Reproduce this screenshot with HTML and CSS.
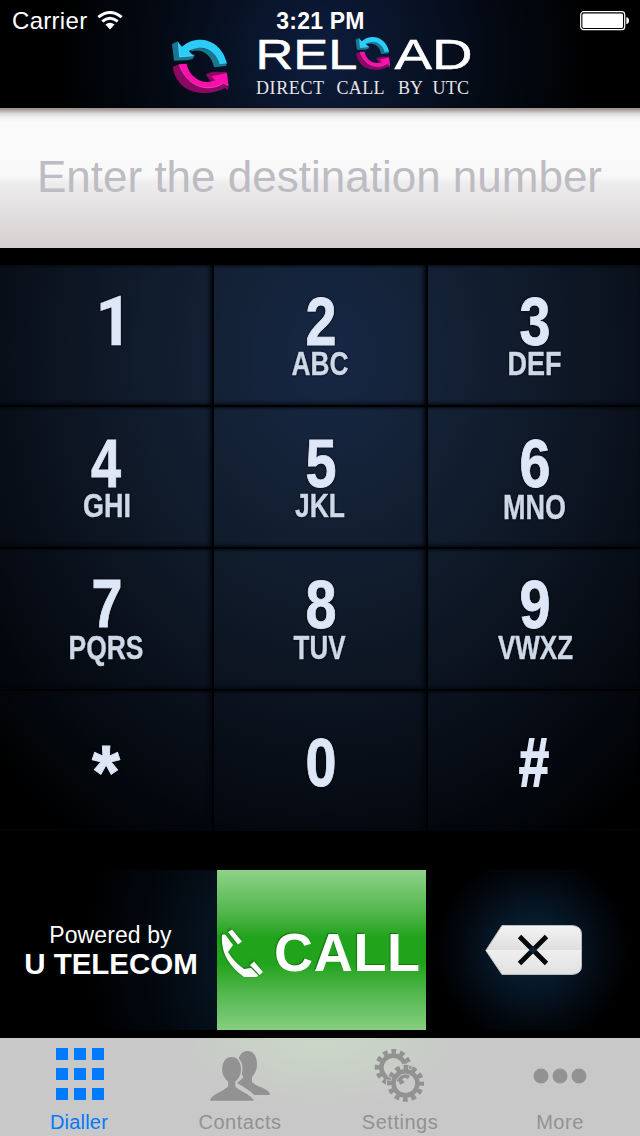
FILE: index.html
```html
<!DOCTYPE html>
<html lang="en">
<head>
<meta charset="utf-8">
<title>Reload Dialler</title>
<link rel="stylesheet" href="styles.css">
</head>
<body>
<div class="phone">
  <header class="header">
    <div class="status">
      <div class="status-left"><span class="carrier">Carrier</span>
        <svg class="wifi" width="26" height="19" viewBox="0 0 26 19"><g fill="none" stroke="#fff" stroke-width="3"><path d="M1.400 6.200Q13-3.200 24.600 6.200"/><path d="M5.300 10.400Q13 4 20.700 10.400"/></g><path d="M8.400 13.600Q13 10 17.600 13.600L13 18.400Z" fill="#fff"/></svg>
      </div>
      <span class="time">3:21 PM</span>
      <svg class="battery" width="49" height="20" viewBox="0 0 49 20"><rect x=".7" y=".7" width="44" height="18" rx="3" fill="none" stroke="#fff" stroke-width="1.200"/><rect x="2.400" y="2.400" width="40.600" height="14.600" rx="1.500" fill="#fff"/><path d="M46.300 6.300Q49 6.700 49 9.700T46.300 13.100Z" fill="#fff"/></svg>
    </div>
    <svg class="logo" width="304" height="72" viewBox="170 36 304 72">
      <defs>
        <g id="arrows">
          <path fill="#187690" d="M36 42L53 34L64 60L105 75L98 87L83 91L42 92Z"/>
          <path fill="#187690" d="M92 56L95 64C130 54 157 80 162 112L198 108L201 99L184 98C173 65 130 45 92 56Z"/>
          <path fill="#2bcdf8" d="M54 36L66 50C106 13 182 22 201 100L179 103C170 64 128 39 87 63L100 78L58 82Z"/>
          <path fill="none" stroke="#83e5ff" stroke-width="1.500" stroke-opacity=".8" d="M55 37L59 81L100 77"/>
          <path fill="#8b0863" d="M38 110L57 103C79 169 143 193 191 160L206 168L204 181L195 174C139 205 50 192 38 110Z"/>
          <path fill="#8b0863" d="M137 133L159 125L202 126L172 150L154 158Z"/>
          <path fill="#fc0fac" d="M57 103L80 101C87 140 125 166 166 152L154 139L201 129L206 168L191 160C143 193 79 169 57 103Z"/>
          <path fill="none" stroke="#ff8ad6" stroke-width="1.500" stroke-opacity=".8" d="M58 104C78 168 143 191 190 160L205 167"/>
        </g>
      </defs>
      <use href="#arrows" transform="translate(160 30) scale(.333)"/>
      <g class="wordmark">
        <text x="255.500" y="69.300" textLength="102" lengthAdjust="spacingAndGlyphs">REL</text>
        <text x="394.500" y="69.300" textLength="78" lengthAdjust="spacingAndGlyphs">AD</text>
      </g>
      <use href="#arrows" transform="translate(348.300 31) scale(.203 .205)"/>
      <g class="tagline">
        <text x="256" y="94" textLength="68">DIRECT</text>
        <text x="336.500" y="94" textLength="48">CALL</text>
        <text x="398" y="94" textLength="25">BY</text>
        <text x="432.500" y="94" textLength="36.500">UTC</text>
      </g>
    </svg>
  </header>

  <div class="destination"><span>Enter the destination number</span></div>

  <main class="pad">
    <svg class="key" viewBox="0 0 212 140"><text class="digit one" x="95.500" y="80" textLength="37" lengthAdjust="spacingAndGlyphs">1</text></svg>
    <svg class="key" viewBox="0 0 212 140"><text class="digit" x="91.500" y="80" textLength="31" lengthAdjust="spacingAndGlyphs">2</text><text class="letters" x="77.500" y="110" textLength="57" lengthAdjust="spacingAndGlyphs">ABC</text></svg>
    <svg class="key" viewBox="0 0 212 140"><text class="digit" x="91.500" y="79.500" textLength="31" lengthAdjust="spacingAndGlyphs">3</text><text class="letters" x="79.500" y="110" textLength="54" lengthAdjust="spacingAndGlyphs">DEF</text></svg>
    <svg class="key" viewBox="0 0 212 140"><text class="digit" x="91" y="80" textLength="30" lengthAdjust="spacingAndGlyphs">4</text><text class="letters" x="83" y="110" textLength="48" lengthAdjust="spacingAndGlyphs">GHI</text></svg>
    <svg class="key" viewBox="0 0 212 140"><text class="digit" x="91.500" y="79.500" textLength="31" lengthAdjust="spacingAndGlyphs">5</text><text class="letters" x="81" y="110" textLength="50" lengthAdjust="spacingAndGlyphs">JKL</text></svg>
    <svg class="key" viewBox="0 0 212 140"><text class="digit" x="91.500" y="79.500" textLength="31" lengthAdjust="spacingAndGlyphs">6</text><text class="letters letters-tall" x="75" y="112" textLength="63" lengthAdjust="spacingAndGlyphs">MNO</text></svg>
    <svg class="key" viewBox="0 0 212 140"><text class="digit" x="91.500" y="77.500" textLength="31" lengthAdjust="spacingAndGlyphs">7</text><text class="letters" x="68.500" y="110" textLength="75" lengthAdjust="spacingAndGlyphs">PQRS</text></svg>
    <svg class="key" viewBox="0 0 212 140"><text class="digit" x="91.500" y="79" textLength="31" lengthAdjust="spacingAndGlyphs">8</text><text class="letters" x="79.500" y="110" textLength="52" lengthAdjust="spacingAndGlyphs">TUV</text></svg>
    <svg class="key" viewBox="0 0 212 140"><text class="digit" x="91.500" y="79" textLength="31" lengthAdjust="spacingAndGlyphs">9</text><text class="letters" x="70" y="110" textLength="75" lengthAdjust="spacingAndGlyphs">VWXZ</text></svg>
    <svg class="key" viewBox="0 0 212 140"><text class="digit star" x="92" y="107" textLength="28" lengthAdjust="spacingAndGlyphs">*</text></svg>
    <svg class="key" viewBox="0 0 212 140"><text class="digit" x="91.500" y="94.500" textLength="31" lengthAdjust="spacingAndGlyphs">0</text></svg>
    <svg class="key" viewBox="0 0 212 140"><text class="digit hash" x="91" y="95" textLength="30" lengthAdjust="spacingAndGlyphs">#</text></svg>
  </main>

  <section class="actions">
    <div class="powered"><span class="by">Powered by</span><strong class="brand">U TELECOM</strong></div>
    <div class="call">
      <svg class="handset" width="46" height="52" viewBox="0 0 46 52"><g fill="#fff"><path d="M3 6Q6 4 8 8L14 16L9 23Q15 33 25 40L32 39L38 45Q41 48 35 48L25 48Q1 31 3 6Z"/><path d="M9 3L13 .5L23 12.500L19 15.500Z"/><path d="M31 36L35 32.500L44 43L40.500 46Z"/></g></svg>
      <span class="call-label">CALL</span>
    </div>
    <div class="erase">
      <svg width="98" height="52" viewBox="0 0 98 52">
        <defs><linearGradient id="plate" x2="0" y2="1"><stop offset="0" stop-color="#f3f3f3"/><stop offset=".5" stop-color="#dedede"/><stop offset=".51" stop-color="#efefef"/><stop offset="1" stop-color="#e1e1e1"/></linearGradient></defs>
        <path d="M17 1.500H87Q96.500 2 96.500 10V42Q96.500 50 87 50.500H17L.8 26.500Z" fill="url(#plate)" stroke="#b9bdc1"/>
        <path d="M34.500 12.500L61.500 39.500M61.500 12.500L34.500 39.500" stroke="#02070b" stroke-width="4.800"/><circle cx="48" cy="26" r="3" fill="#0b2233"/>
      </svg>
    </div>
  </section>

  <nav class="tabs">
    <div class="tab active">
      <svg width="160" height="72" viewBox="0 0 160 72"><g fill="currentColor"><path d="M56 10h12v12H56zM74 10h12v12H74zM92 10h12v12H92zM56 30h12v12H56zM74 30h12v12H74zM92 30h12v12H92zM56 50h12v12H56zM74 50h12v12H74zM92 50h12v12H92z"/></g></svg>
      <span>Dialler</span>
    </div>
    <div class="tab">
      <svg width="160" height="72" viewBox="0 0 160 72"><path fill="currentColor" d="M87.500 13C94 13 97 19 97 26C97 32 95 36 92 39V44C98 50 110 50 110 57H94C91 53 82 48 77 45L83 40V38C79 35 78 31 78 26C78 19 81 13 87.500 13Z"/><path fill="currentColor" stroke="#c8cbc8" stroke-width="1.400" d="M71.500 18.300C78 18.300 81.800 24 81.800 31C81.800 37 79.500 41 76 44V48C80 53 95 57 94.600 63.500H49.300C49 56 63 53 67.500 48V44C64 41 61.400 37 61.400 31C61.400 24 65 18.300 71.500 18.300Z"/></svg>
      <span>Contacts</span>
    </div>
    <div class="tab">
      <svg width="160" height="72" viewBox="0 0 160 72">
        <defs><mask id="behind"><rect width="160" height="72" fill="#fff"/><circle cx="85.500" cy="45.300" r="12" fill="none" stroke="#000" stroke-width="6"/><circle cx="85.500" cy="45.300" r="16" fill="none" stroke="#000" stroke-width="7" stroke-dasharray="6.200 2.178" stroke-dashoffset="3.100"/></mask></defs>
        <g fill="none" stroke="currentColor">
          <g mask="url(#behind)"><circle cx="73.300" cy="29.600" r="12" stroke-width="4.600"/><circle cx="73.300" cy="29.600" r="15.700" stroke-width="5.600" stroke-dasharray="4.600 3.620" stroke-dashoffset="2.300"/></g>
          <circle cx="85.500" cy="45.300" r="12" stroke-width="4.600"/><circle cx="85.500" cy="45.300" r="15.700" stroke-width="5.600" stroke-dasharray="4.600 3.620" stroke-dashoffset="2.300"/>
          <path d="M79 43Q83 37 89 38.500M79 41L82 45" stroke-width="2.600"/>
        </g>
      </svg>
      <span>Settings</span>
    </div>
    <div class="tab">
      <svg width="160" height="72" viewBox="0 0 160 72"><g fill="currentColor"><circle cx="61" cy="38" r="7.500"/><circle cx="80" cy="38" r="7.500"/><circle cx="99" cy="38" r="7.500"/></g></svg>
      <span>More</span>
    </div>
  </nav>
</div>
</body>
</html>
```
FILE: styles.css
```css
* { box-sizing: border-box; }
body { margin: 0; background: #000; }
svg { display: block; }
.phone {
  width: 640px;
  height: 1136px;
  display: flex;
  flex-direction: column;
  overflow: hidden;
  background: #000;
  color: #fff;
  font-family: "Liberation Sans", Arial, sans-serif;
}

.header {
  height: 108px;
  background: radial-gradient(circle 270px at 325px 55px, #0e1d3f 0, #091429 30%, #040a15 60%, #000 100%);
}
.status {
  height: 36px;
  padding: 0 11px 0 12px;
  display: grid;
  grid-template-columns: 1fr auto 1fr;
  line-height: 42px;
}
.status-left { display: flex; gap: 10px; }
.carrier { font-size: 24px; letter-spacing: .3px; }
.wifi { margin-top: 11px; }
.time { font-size: 23px; font-weight: bold; letter-spacing: .2px; }
.battery { margin-top: 11px; justify-self: end; }
.logo { margin-left: 170px; overflow: visible; }
.wordmark { font-size: 42px; fill: #fff; stroke: #fff; stroke-width: .5px; }
.tagline { font-family: "Liberation Serif", serif; font-size: 18px; fill: #e4e6ea; }

.destination {
  height: 140px;
  padding-left: 37px;
  background: linear-gradient(#9d9290 0, #aaa09e 2px, #d4d2d0 5px, #f0f0f0 9px, #fafafa 14px, #f9faf9 45px, #f8f8f8 68px, #eeecec 75px, #e3e1e1 100px, #d5cfcf 140px);
  color: #bdbcc3;
  font-size: 44px;
  line-height: 138px;
  white-space: nowrap;
}

.pad {
  margin-top: 17px;
  height: 566px;
  display: grid;
  grid-template: repeat(4, 140px) / repeat(3, 212px);
  gap: 2px;
  background: #000;
}
.key {
  width: 212px;
  height: 140px;
  background: radial-gradient(ellipse 470px 580px at var(--cx) var(--cy), #172745 0, #132033 28%, #0d1623 54%, #050a12 80%, #000 100%);
  box-shadow: inset -5px -4px 4px -3px #02060d, inset 0 4px 3px -3px #040912;
}
.key:nth-child(3n+1) { --cx: 330px; }
.key:nth-child(3n+2) { --cx: 116px; }
.key:nth-child(3n) { --cx: -98px; box-shadow: inset 0 -4px 4px -3px #02060d, inset 0 4px 3px -3px #040912; }
.key:nth-child(-n+12) { --cy: -336px; }
.key:nth-child(-n+9) { --cy: -194px; }
.key:nth-child(-n+6) { --cy: -52px; }
.key:nth-child(-n+3) { --cy: 90px; }
.digit {
  font-size: 69px;
  font-weight: bold;
  fill: #dde7f7;
  stroke: #dde7f7;
  stroke-width: .9px;
  filter: drop-shadow(0 0 1px #000);
}
.one { font-family: Roboto, sans-serif; stroke-width: .3px; }
.star { font-size: 76px; }
.hash { stroke-width: 1.8px; }
.letters {
  font-size: 33px;
  font-weight: bold;
  fill: #cdd8e9;
  stroke: #cdd8e9;
  stroke-width: .4px;
  filter: drop-shadow(0 0 1px #000);
}
.letters-tall { font-size: 35px; }

.actions {
  margin-top: 39px;
  height: 160px;
  display: grid;
  grid-template: 160px / 217px 209px 214px;
}
.powered {
  display: flex;
  flex-direction: column;
  align-items: center;
  padding: 51px 0 0 5px;
  background: radial-gradient(circle 240px at 320px 80px, #0a2033 0, #06131f 45%, #02060c 75%, #000 100%);
}
.by { font-size: 23px; line-height: 28px; letter-spacing: .1px; margin-right: 1px; }
.brand { font-size: 29.5px; line-height: 30px; }
.call {
  display: flex;
  background: linear-gradient(#8ed288 0, #55b850 25%, #22a31c 42%, #22a31c 58%, #55b850 78%, #86cf80 100%);
}
.handset { margin: 59px 0 0 2px; filter: drop-shadow(-1px -1px 1px #126b0e); }
.call-label {
  margin-left: 9px;
  font-size: 54px;
  line-height: 165px;
  height: 160px;
  font-weight: bold;
  letter-spacing: .7px;
  text-shadow: -1px -1px 1px #14740f;
}
.erase {
  display: flex;
  padding: 54px 0 0 59px;
  background: radial-gradient(circle 98px at 107px 80px, #0b2639 0, #061625 42%, #03080f 75%, #000 100%);
}

.tabs {
  margin-top: 8px;
  height: 98px;
  display: grid;
  grid-template-columns: repeat(4, 160px);
  background: radial-gradient(ellipse 150px 70px at 320px 0, #cad7c8 0, #c9d1c7 45%, #c8c8c8 100%);
}
.tab {
  display: flex;
  flex-direction: column;
  align-items: center;
  color: #929292;
  font-size: 20px;
  line-height: 24px;
  letter-spacing: .5px;
}
.active { color: #007aff; letter-spacing: .2px; }
.active span { margin-right: 2px; }
```
